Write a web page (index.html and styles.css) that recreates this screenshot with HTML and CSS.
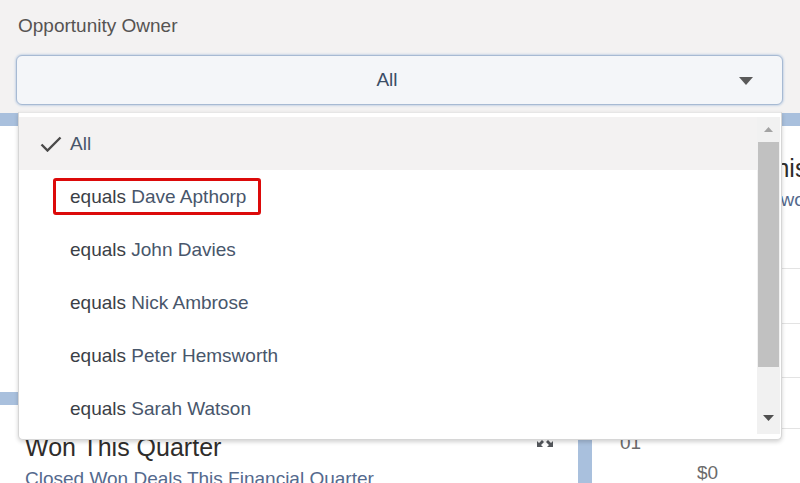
FILE: index.html
```html
<!DOCTYPE html>
<html>
<head>
<meta charset="utf-8">
<link rel="stylesheet" href="styles.css">
</head>
<body>
<div class="page">
  <section class="filter">
    <div class="filter-label">Opportunity Owner</div>
    <div class="select">
      <span class="select-value">All</span>
      <svg class="select-caret" width="14" height="8" viewBox="0 0 14 8"><path d="M0 0H14L7 8Z"/></svg>
    </div>
  </section>

  <section class="dash">
    <div class="card card-a"></div>
    <div class="card card-b">
      <div class="card-title">Deals Closed This Quarter</div>
      <div class="card-sub">Total opportunities won</div>
      <div class="chart">
        <div class="gridline" style="top:28px"></div>
        <div class="gridline" style="top:83px"></div>
        <div class="gridline" style="top:137px"></div>
        <div class="gridline" style="top:188px"></div>
        <span class="axis-label" style="top:192px;left:28px">01</span>
        <span class="axis-label" style="top:222px;left:105px">$0</span>
      </div>
    </div>
    <div class="card card-c">
      <div class="card-head">
        <div class="card-title">Won This Quarter</div>
        <svg class="expand" width="18" height="18" viewBox="0 0 18 18">
          <path d="M1 1h6L5 3l3 3-2 2-3-3-2 2z"/>
          <path d="M17 1v6l-2-2-3 3-2-2 3-3-2-2z"/>
          <path d="M1 17v-6l2 2 3-3 2 2-3 3 2 2z"/>
          <path d="M17 17h-6l2-2-3-3 2-2 3 3 2-2z"/>
        </svg>
      </div>
      <div class="card-sub">Closed Won Deals This Financial Quarter</div>
    </div>
  </section>

  <div class="menu">
    <ul class="menu-list">
      <li class="menu-item is-selected">
        <span class="check-col"><svg class="check" width="22" height="16" viewBox="0 0 22 16"><path d="M1.5 8.5L7.5 14.5L20.5 1.5"/></svg></span>
        <span class="item-name">All</span>
      </li>
      <li class="menu-item">
        <span class="check-col"></span>
        <span class="highlight"><span class="op">equals</span> <span class="item-name">Dave Apthorp</span></span>
      </li>
      <li class="menu-item">
        <span class="check-col"></span>
        <span class="op">equals</span>&nbsp;<span class="item-name">John Davies</span>
      </li>
      <li class="menu-item">
        <span class="check-col"></span>
        <span class="op">equals</span>&nbsp;<span class="item-name">Nick Ambrose</span>
      </li>
      <li class="menu-item">
        <span class="check-col"></span>
        <span class="op">equals</span>&nbsp;<span class="item-name">Peter Hemsworth</span>
      </li>
      <li class="menu-item">
        <span class="check-col"></span>
        <span class="op">equals</span>&nbsp;<span class="item-name">Sarah Watson</span>
      </li>
    </ul>
    <div class="scrollbar">
      <div class="sb-btn sb-up"><svg width="9" height="5" viewBox="0 0 9 5"><path d="M0 5L4.5 0L9 5Z"/></svg></div>
      <div class="sb-thumb"></div>
      <div class="sb-track"></div>
      <div class="sb-btn sb-down"><svg width="11" height="6" viewBox="0 0 11 6"><path d="M0 0H11L5.5 6Z"/></svg></div>
    </div>
  </div>
</div>
</body>
</html>
```

FILE: styles.css
```css
* { box-sizing: border-box; }

html, body {
  margin: 0;
  padding: 0;
}

body {
  font-family: "Liberation Sans", Arial, sans-serif;
  background: #f3f2f2;
}

.page {
  position: relative;
  width: 800px;
  height: 483px;
  overflow: hidden;
  background: #f3f2f2;
}

/* ---------- filter ---------- */
.filter {
  height: 113px;
  padding: 15px 17px 8px 16px;
}

.filter-label {
  font-size: 19px;
  line-height: 22px;
  color: #565452;
  margin-left: 2px;
}

.select {
  margin-top: 18px;
  height: 50px;
  display: flex;
  align-items: center;
  padding-left: 18px;
  background: #f4f6f9;
  border: 1px solid #a7bad3;
  border-radius: 6px;
  box-shadow: 0 0 2px 1px #c9d6e6;
}

.select-value {
  flex: 1;
  text-align: center;
  font-size: 19px;
  color: #3b4d66;
}

.select-caret {
  fill: #5a5a5a;
  margin-right: 29px;
  margin-top: 1px;
}

/* ---------- dashboard ---------- */
.dash {
  height: 370px;
  background: #a9c0dd;
  padding-top: 13px;
  display: grid;
  grid-template-columns: 578px 1fr;
  grid-template-rows: 266px 1fr;
  column-gap: 14px;
  row-gap: 13px;
}

.card {
  background: #ffffff;
  overflow: hidden;
  min-width: 0;
}

.card-a { grid-column: 1; grid-row: 1; }

.card-b {
  grid-column: 2;
  grid-row: 1 / span 2;
  padding: 27px 0 0 13px;
  white-space: nowrap;
}

.card-c {
  grid-column: 1;
  grid-row: 2;
  padding: 27px 25px 0 25px;
  white-space: nowrap;
}

.card-head {
  display: flex;
  justify-content: space-between;
  align-items: flex-start;
}

.card-title {
  font-size: 25px;
  line-height: 30px;
  color: #2f2d2b;
  width: 600px;
}

.card-head .card-title { width: auto; }

.card-sub {
  font-size: 19px;
  line-height: 24px;
  color: #54698d;
  margin-top: 5px;
}

.card-b .card-sub { margin-left: 16px; }

.card-c .card-sub { margin-top: 5px; }

.expand {
  fill: #54575c;
  margin-top: -2px;
  margin-right: -1px;
}

.chart {
  position: relative;
  margin-top: 28px;
  width: 600px;
  height: 260px;
  margin-left: -13px;
}

.gridline {
  position: absolute;
  left: 0;
  right: 0;
  height: 1px;
  background: #e3e3e3;
}

.axis-label {
  position: absolute;
  font-size: 19px;
  line-height: 22px;
  color: #6b6b6b;
}

/* ---------- dropdown menu ---------- */
.menu {
  position: absolute;
  top: 112px;
  left: 18px;
  width: 764px;
  height: 328px;
  display: flex;
  background: #ffffff;
  border: 1px solid #d6d6d6;
  border-top-color: #e6e6e6;
  border-radius: 0 0 5px 5px;
  box-shadow: 0 2px 4px rgba(0, 0, 0, 0.18);
}

.menu-list {
  flex: 1;
  list-style: none;
  margin: 0;
  padding: 4px 0 0 0;
}

.menu-item {
  height: 53px;
  display: flex;
  align-items: center;
  padding-left: 21px;
  font-size: 19px;
  color: #3e3e3c;
  white-space: nowrap;
}

.menu-item.is-selected {
  background: #f3f2f2;
}

.check-col {
  width: 30px;
  flex: none;
  display: flex;
  align-items: center;
}

.check {
  fill: none;
  stroke: #4a4a4a;
  stroke-width: 2.4;
  margin-top: 1px;
}

.op { color: #3b3f46; }

.item-name { color: #48566b; }

.highlight {
  display: inline-block;
  margin-left: -17px;
  padding: 0 12px 0 14px;
  line-height: 31px;
  border: 3px solid #dc0a0a;
  border-radius: 3px;
}

/* ---------- scrollbar ---------- */
.scrollbar {
  width: 23px;
  margin: 4px 1px 5px 0;
  display: flex;
  flex-direction: column;
  background: #f1f1f1;
}

.sb-btn {
  height: 25px;
  display: flex;
  align-items: center;
  justify-content: center;
}

.sb-up svg { fill: #a3a3a3; }
.sb-down svg { fill: #505050; }
.sb-down { margin-bottom: 4px; }

.sb-thumb {
  height: 225px;
  margin: 0 1px;
  background: #c1c1c1;
}

.sb-track { flex: 1; }
```
